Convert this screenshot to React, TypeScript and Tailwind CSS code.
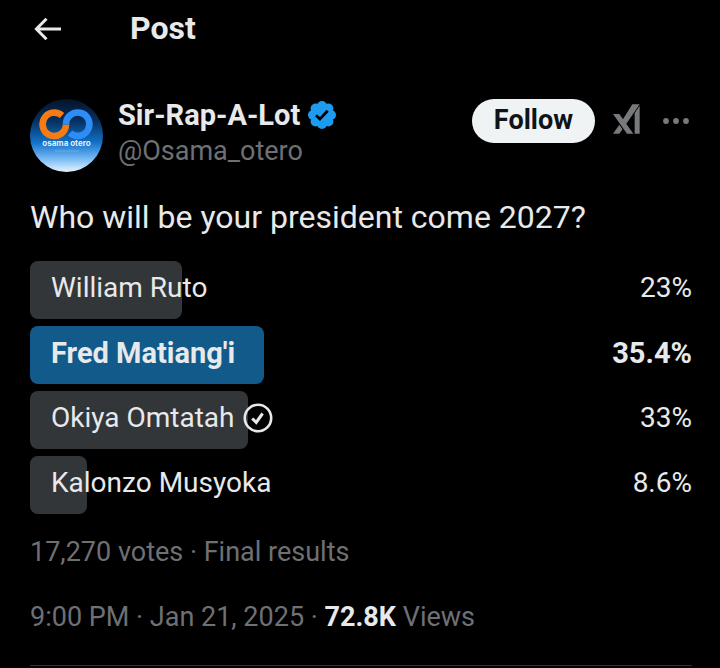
import React from "react";

type Option = {
  label: string;
  percent: number;
  winner?: boolean;
  voted?: boolean;
};

const options: Option[] = [
  { label: "William Ruto", percent: 23 },
  { label: "Fred Matiang'i", percent: 35.4, winner: true },
  { label: "Okiya Omtatah", percent: 33, voted: true },
  { label: "Kalonzo Musyoka", percent: 8.6 },
];

function BackIcon() {
  return (
    <svg viewBox="0 0 28 24" className="h-6 w-7" fill="none" stroke="currentColor" strokeWidth="3" aria-hidden="true">
      <path d="M27 13H2.500M12.500 2.800L2.400 13l10.100 10.200" />
    </svg>
  );
}

function Avatar() {
  return (
    <svg viewBox="0 0 73 73" className="size-[73px] shrink-0" role="img" aria-label="osama otero">
      <defs>
        <linearGradient id="sky" x1="0" y1="0" x2="0" y2="1">
          <stop offset="0" stopColor="#04142b" />
          <stop offset="0.3" stopColor="#06305f" />
          <stop offset="0.6" stopColor="#1372c9" />
          <stop offset="0.8" stopColor="#6db4f3" />
          <stop offset="1" stopColor="#e6f3fe" />
        </linearGradient>
      </defs>
      <circle cx="36.5" cy="36.5" r="36.5" fill="url(#sky)" />
      <g fill="none" strokeWidth="6.600">
        <path d="M32 16.500A11.700 11.700 0 1 0 36 25.500" stroke="#f57c14" />
        <path d="M40 34A11.700 11.700 0 1 0 36 25.500" stroke="#2d8cf5" />
      </g>
      <text x="36.5" y="47" textAnchor="middle" fontFamily="Inter, sans-serif" fontWeight="700" fontSize="8" fill="#e4f0fb">
        osama otero
      </text>
      <path d="M25 52h24" stroke="#6fb2ee" strokeWidth="1" strokeDasharray="2 0.6" />
    </svg>
  );
}

function VerifiedBadge() {
  return (
    <svg viewBox="0 0 28 28" className="size-7 shrink-0" role="img" aria-label="Verified account">
      <g fill="#1d9bf0">
        <circle cx="14" cy="14" r="10.500" />
        <circle cx="14" cy="5" r="5" />
        <circle cx="20.400" cy="7.600" r="5" />
        <circle cx="23" cy="14" r="5" />
        <circle cx="20.400" cy="20.400" r="5" />
        <circle cx="14" cy="23" r="5" />
        <circle cx="7.600" cy="20.400" r="5" />
        <circle cx="5" cy="14" r="5" />
        <circle cx="7.600" cy="7.600" r="5" />
      </g>
      <path d="M8 14.300l3.900 3.800L19.700 9.800" fill="none" stroke="#000" strokeWidth="2.800" />
    </svg>
  );
}

function GrokIcon() {
  return (
    <svg viewBox="0 0 81 88" className="h-[30px] w-[27px]" fill="currentColor" aria-hidden="true">
      <path d="M0 29h19l42 59H42zM0 88l19-27 9.500 13.500L19 88zM58 0h22L38 61 28.500 47zM65 26L80 4v84H65z" />
    </svg>
  );
}

function MoreIcon() {
  return (
    <svg viewBox="0 0 26 6" className="h-[6px] w-[26px]" fill="currentColor" aria-hidden="true">
      <circle cx="3" cy="3" r="2.900" />
      <circle cx="13" cy="3" r="2.900" />
      <circle cx="23" cy="3" r="2.900" />
    </svg>
  );
}

function VotedIcon() {
  return (
    <svg viewBox="0 0 30 30" className="size-[30px] shrink-0" fill="none" stroke="currentColor" role="img" aria-label="Your vote">
      <circle cx="15" cy="15" r="13.200" strokeWidth="2.600" />
      <path d="M9.200 15.500l4 3.900L19.600 10.500" strokeWidth="3" />
    </svg>
  );
}

function PollRow({ label, percent, winner, voted }: Option) {
  return (
    <li className={winner ? "relative flex h-[58px] items-center text-[29px] font-bold" : "relative flex h-[58px] items-center"}>
      <div
        className={winner ? "absolute inset-y-0 left-0 rounded-lg bg-[#115a8a]" : "absolute inset-y-0 left-0 rounded-lg bg-[#333639]"}
        style={{ width: `${percent}%` }}
      />
      <div className="relative flex flex-1 items-center justify-between pb-1 pl-[21px]">
        <span className="flex items-center gap-2">
          {label}
          {voted && <VotedIcon />}
        </span>
        <span>{percent}%</span>
      </div>
    </li>
  );
}

export default function App() {
  return (
    <div className="min-h-screen bg-black font-[Roboto,'Noto_Sans',sans-serif] text-[28px] leading-9 text-[#e7e9ea]">
      <header className="flex h-14 items-center gap-[68px] px-[34px]">
        <button type="button" aria-label="Back">
          <BackIcon />
        </button>
        <h1 className="text-[32px] font-bold">Post</h1>
      </header>
      <main className="pt-[41px] pr-7 pl-[30px]">
        <article>
          <div className="flex items-center gap-[15px]">
            <Avatar />
            <div className="min-w-0 flex-1 pb-1">
              <div className="flex items-center gap-2">
                <a href="#profile" className="text-[29px] font-bold">Sir-Rap-A-Lot</a>
                <VerifiedBadge />
              </div>
              <a href="#profile" className="block text-[27px] text-[#6e7073]">@Osama_otero</a>
            </div>
            <div className="mb-7 flex shrink-0 items-center text-[#77797c]">
              <button type="button" className="mr-[18px] h-11 rounded-full bg-[#eff3f4] px-[22px] pb-[2px] text-[27px] font-bold text-[#0f1419]">
                Follow
              </button>
              <button type="button" aria-label="Explain this post" className="mr-[23px] pb-1">
                <GrokIcon />
              </button>
              <button type="button" aria-label="More" className="mr-[3px] flex">
                <MoreIcon />
              </button>
            </div>
          </div>
          <p className="mt-6 text-[32px] leading-10">Who will be your president come 2027?</p>
          <ul className="mt-6 flex flex-col gap-[7px]">
            {options.map((option) => (
              <PollRow key={option.label} {...option} />
            ))}
          </ul>
          <p className="mt-5 text-[27px] text-[#6e7073]">17,270 votes · Final results</p>
          <div className="mt-[29px] border-b border-[#2f3336] pb-[30px] text-[27px] text-[#6e7073]">
            <time dateTime="2025-01-21T21:00">9:00 PM · Jan 21, 2025</time> ·{" "}
            <strong className="font-bold text-[#e7e9ea]">72.8K</strong> <span>Views</span>
          </div>
        </article>
      </main>
    </div>
  );
}
